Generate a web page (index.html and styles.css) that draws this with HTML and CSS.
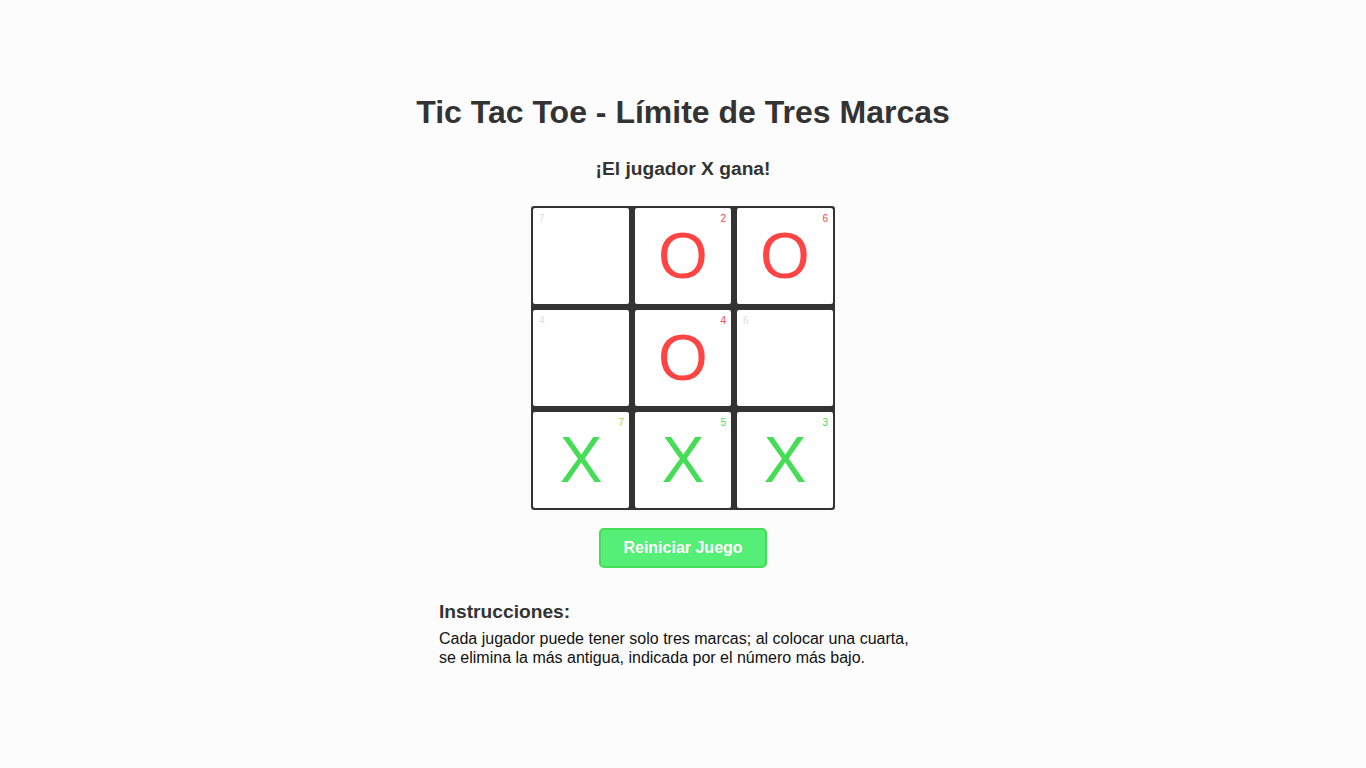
FILE: index.html
```html
<!DOCTYPE html>
<html lang="es">
<head>
<meta charset="utf-8">
<title>Tic Tac Toe - Límite de Tres Marcas</title>
<link rel="stylesheet" href="styles.css">
</head>
<body>
<main class="game">
  <h1 class="title">Tic Tac Toe - Límite de Tres Marcas</h1>
  <div class="status">¡El jugador X gana!</div>
  <div class="board">
    <div class="cell empty"><span class="num">7</span></div>
    <div class="cell o"><span class="num">2</span><span class="mark">O</span></div>
    <div class="cell o"><span class="num">6</span><span class="mark">O</span></div>
    <div class="cell empty"><span class="num">4</span></div>
    <div class="cell o"><span class="num">4</span><span class="mark">O</span></div>
    <div class="cell empty"><span class="num">6</span></div>
    <div class="cell x"><span class="num old">7</span><span class="mark">X</span></div>
    <div class="cell x"><span class="num">5</span><span class="mark">X</span></div>
    <div class="cell x"><span class="num">3</span><span class="mark">X</span></div>
  </div>
  <button class="reset">Reiniciar Juego</button>
  <section class="instructions">
    <h2>Instrucciones:</h2>
    <p>Cada jugador puede tener solo tres marcas; al colocar una cuarta, se elimina la más antigua, indicada por el número más bajo.</p>
  </section>
</main>
</body>
</html>
```

FILE: styles.css
```css
html, body {
  margin: 0;
  padding: 0;
  background: #fcfcfc;
}
body {
  font-family: "Liberation Sans", Arial, sans-serif;
  color: #333;
}
.game {
  display: flex;
  flex-direction: column;
  align-items: center;
  padding-top: 94px;
}
.title {
  margin: 0;
  font-size: 32px;
  line-height: 37px;
  font-weight: bold;
  color: #333;
}
.status {
  margin-top: 26px;
  font-size: 19.2px;
  line-height: 23px;
  font-weight: bold;
  color: #333;
}
.board {
  margin-top: 26px;
  display: grid;
  grid-template-columns: repeat(3, 96px);
  grid-template-rows: repeat(3, 96px);
  gap: 6px;
  background: #333;
  border: 2px solid #333;
  border-radius: 3px;
}
.cell {
  position: relative;
  background: #fff;
  border-radius: 2px;
  display: flex;
  align-items: center;
  justify-content: center;
}
.mark {
  font-size: 64px;
  line-height: 1;
}
.o .mark { color: #ff4444; }
.x .mark { color: #44dd55; }
.num {
  position: absolute;
  top: 5px;
  right: 5px;
  font-size: 10px;
  line-height: 12px;
}
.empty .num {
  right: auto;
  left: 6px;
  color: #dddddd;
}
.o .num { color: #ff4444; }
.x .num { color: #44dd55; }
.x .num.old { color: #a8d84a; }
.reset {
  margin-top: 18px;
  height: 40px;
  padding: 0 22px 0;
  font-family: "Liberation Sans", Arial, sans-serif;
  font-size: 16px;
  font-weight: bold;
  color: #fff;
  background: #55ee77;
  border: 2px solid #44dd55;
  border-radius: 5px;
  cursor: pointer;
}
.instructions {
  width: 488px;
  margin-top: 33px;
}
.instructions h2 {
  margin: 0;
  font-size: 19.2px;
  line-height: 22px;
  font-weight: bold;
  color: #333;
}
.instructions p {
  margin: 6px 0 0;
  font-size: 16px;
  line-height: 19px;
  color: #111;
}
```
